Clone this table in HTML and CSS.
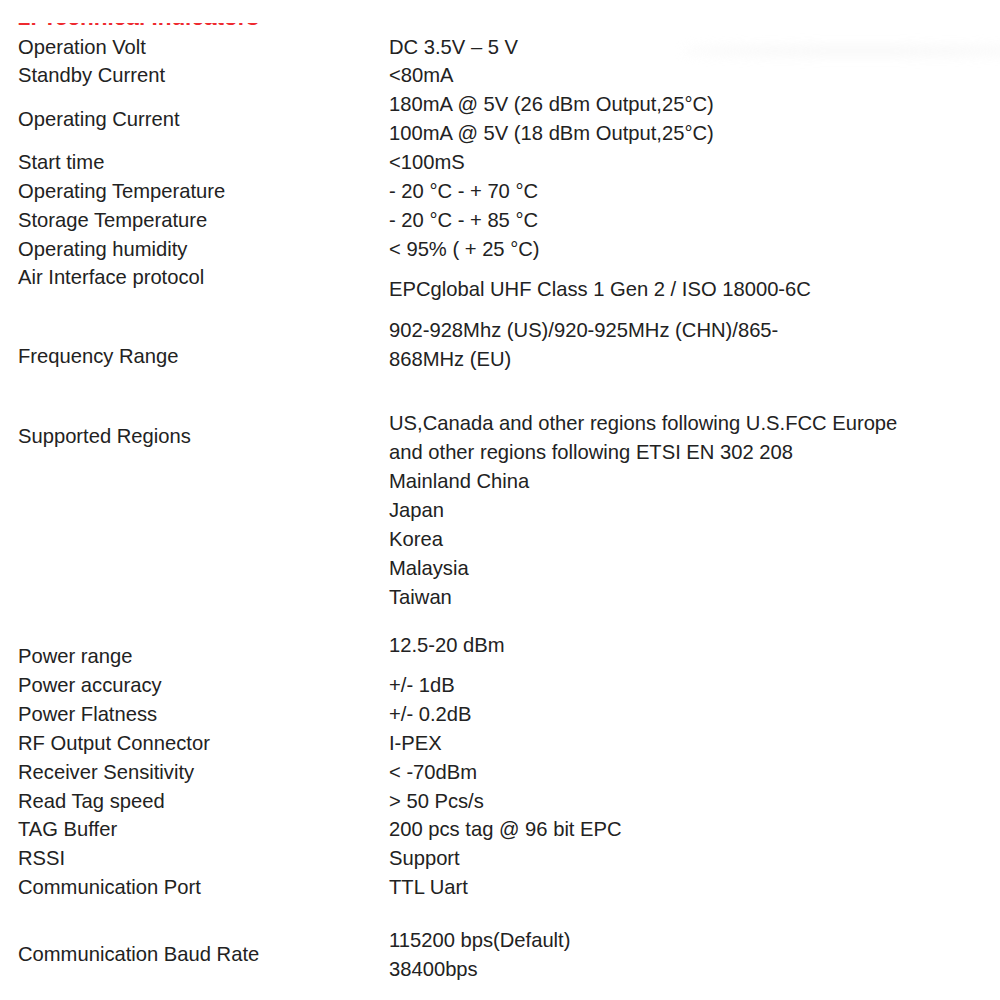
FILE: index.html
```html
<!DOCTYPE html>
<html lang="en">
<head>
<meta charset="utf-8">
<title>Technical Indicators</title>
<link rel="stylesheet" href="styles.css">
</head>
<body>
<div class="page">
  <div class="heading-clip"><h2 class="heading">2. Technical Indicators</h2></div>
  <div class="spec">
    <div class="lbl">Operation Volt</div><div class="val">DC 3.5V – 5 V</div>
    <div class="lbl">Standby Current</div><div class="val">&lt;80mA</div>
    <div class="lbl mid">Operating Current</div><div class="val">180mA @ 5V (26 dBm Output,25°C)<br>100mA @ 5V (18 dBm Output,25°C)</div>
    <div class="lbl">Start time</div><div class="val">&lt;100mS</div>
    <div class="lbl">Operating Temperature</div><div class="val">- 20 °C - + 70 °C</div>
    <div class="lbl">Storage Temperature</div><div class="val">- 20 °C - + 85 °C</div>
    <div class="lbl">Operating humidity</div><div class="val">&lt; 95% ( + 25 °C)</div>
    <div class="lbl">Air Interface protocol</div><div class="val pt12">EPCglobal UHF Class 1 Gen 2 / ISO 18000-6C</div>
    <div class="lbl mid">Frequency Range</div><div class="val pt12 pb-freq">902-928Mhz (US)/920-925MHz (CHN)/865-<br>868MHz (EU)</div>
    <div class="lbl pt13">Supported Regions</div><div class="val">US,Canada and other regions following U.S.FCC Europe<br>and other regions following ETSI EN 302 208<br>Mainland China<br>Japan<br>Korea<br>Malaysia<br>Taiwan</div>
    <div class="lbl pt31">Power range</div><div class="val pt20">12.5-20 dBm</div>
    <div class="lbl">Power accuracy</div><div class="val">+/- 1dB</div>
    <div class="lbl">Power Flatness</div><div class="val">+/- 0.2dB</div>
    <div class="lbl">RF Output Connector</div><div class="val">I-PEX</div>
    <div class="lbl">Receiver Sensitivity</div><div class="val">&lt; -70dBm</div>
    <div class="lbl">Read Tag speed</div><div class="val">&gt; 50 Pcs/s</div>
    <div class="lbl">TAG Buffer</div><div class="val">200 pcs tag @ 96 bit EPC</div>
    <div class="lbl">RSSI</div><div class="val">Support</div>
    <div class="lbl">Communication Port</div><div class="val">TTL Uart</div>
    <div class="lbl mid">Communication Baud Rate</div><div class="val pt24 pb23">115200 bps(Default)<br>38400bps</div>
  </div>
  <div class="smudge"></div>
</div>
</body>
</html>
```
FILE: styles.css
```css
html, body {
  margin: 0;
  padding: 0;
  background: #ffffff;
}
body {
  font-family: "Liberation Sans", Arial, sans-serif;
  color: #222222;
  overflow: hidden;
}
.page {
  position: relative;
  padding: 0 18px;
  height: 1000px;
  overflow: hidden;
}
.heading-clip {
  margin-top: 23px;
  height: 3px;
  overflow: hidden;
}
.heading {
  margin: -15.6px 0 0 0;
  font-size: 22.5px;
  line-height: 22px;
  font-weight: bold;
  color: #ee2a2f;
  white-space: nowrap;
}
.spec {
  margin-top: 6.6px;
  display: grid;
  grid-template-columns: 371px auto;
  font-size: 20.2px;
  line-height: 28.85px;
}
.lbl, .val {
  white-space: nowrap;
}
.lbl.mid { align-self: center; }
.pt12 { padding-top: 12px; }
.pt13 { padding-top: 13px; }
.pt20 { padding-top: 20px; }
.pt24 { padding-top: 24px; }
.pt31 { padding-top: 31px; }
.pb23 { padding-bottom: 23px; }
.pb-freq { padding-bottom: 35.6px; }
.smudge {
  position: absolute;
  left: 680px;
  top: 46px;
  width: 360px;
  height: 10px;
  border-radius: 50%;
  background: #f2f2f2;
  filter: blur(6px);
  opacity: 0.6;
}
```
